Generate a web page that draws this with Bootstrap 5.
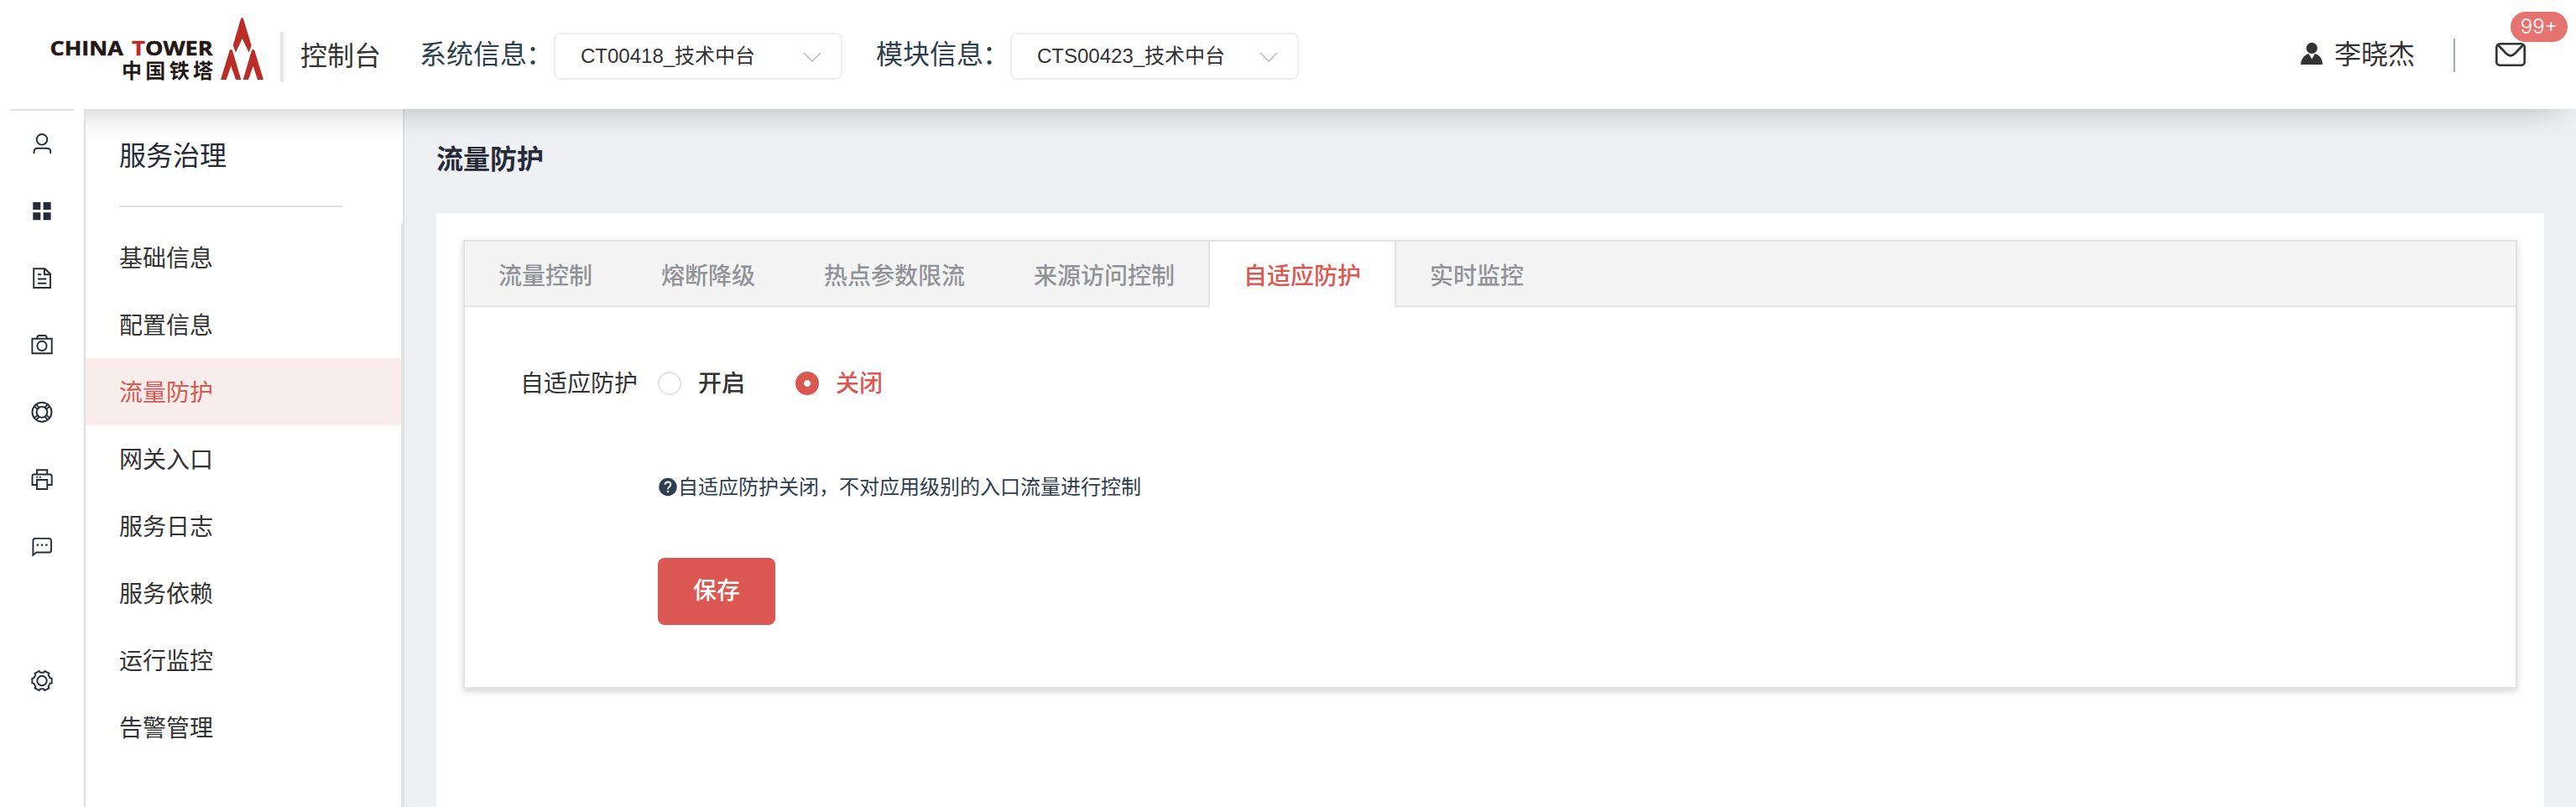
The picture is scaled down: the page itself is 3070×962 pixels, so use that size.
<!DOCTYPE html>
<html lang="zh-CN">
<head>
<meta charset="utf-8">
<meta name="viewport" content="width=device-width, initial-scale=1">
<title>流量防护 - 控制台</title>
<link href="https://cdn.jsdelivr.net/npm/bootstrap@5.3.0/dist/css/bootstrap.min.css" rel="stylesheet">
<style>
  :root { --brand: #db5751; --ink: #262b3a; --navy: #2c3e50; --line: #dfdfe3; }
  body { font-family: "Liberation Sans", "Noto Sans CJK SC", sans-serif; font-size: 28px; line-height: 1.2; color: #333; height: 962px; overflow: hidden; }
  svg { display: block; flex: none; }
  .fs-32 { font-size: 32px; line-height: 40px; }

  .topbar { height: 130px; background: #fff; box-shadow: 0 20px 40px -20px rgba(0,0,0,.24); z-index: 2; padding-left: 60px; }
  .logo { margin-top: 20px; }
  .logo text { font-family: "Open Sans", "Noto Sans CJK SC", sans-serif; font-weight: 700; fill: #231815; }
  .logo .latin { word-spacing: 3px; stroke: #231815; stroke-width: .5px; }
  .logo .red { fill: #bb2c27; }
  .logo tspan.red { stroke: #bb2c27; }
  .vbar { width: 4px; height: 60px; background: #e8e8e8; margin: 38px 20px 0 19px; }
  .console-name { margin-top: 47px; width: 142px; }
  .info-label { width: 160px; color: var(--navy); margin-top: 45px; white-space: nowrap; }
  .info-label span { margin-left: -1px; }
  .picker { width: 344px; height: 56px; margin-top: 39px; border: 2px solid #eee; border-radius: 8px; padding: 1px 23px 0 30px; font-size: 24px; }
  .picker-first { margin-right: 40px; }
  .user-side { margin-left: auto; padding-right: 60px; }
  .user-name { margin-top: 45px; }
  .user-bar { width: 2px; height: 40px; background: #a5acb7; margin: 46px 48px 0 46px; }
  .count { top: 14px; left: 18px; width: 68px; height: 36px; border-radius: 18px; background: #e57470; color: #fff; font-family: Inter, sans-serif; font-weight: 300; font-size: 24px; line-height: 36px; text-align: center; }

  .rail { width: 102px; background: #fff; border-right: 2px solid var(--line); z-index: 3; }
  .rail-rule { height: 2px; margin: 0 12px -1px; background: var(--line); }
  .rail-item { height: 80px; }
  .rail-item svg { fill: none; stroke: var(--ink); stroke-width: 1.9; }
  .rail-item.gap { margin-top: 80px; }

  .side { width: 380px; background: #fff; border-right: 2px solid #e0e1e5; }
  .side-title { height: 115px; padding: 36px 0 0 40px; color: var(--ink); }
  .side-rule { height: 2px; background: var(--line); margin: 0 72px 20px 40px; }
  .side-menu { border-right: 2px solid #e4e4e4; }
  .side-menu a { height: 80px; line-height: 77px; padding: 3px 0 0 40px; color: #333; text-decoration: none; display: block; }
  .side-menu a.active { background: #f9edeb; color: var(--brand); }

  .main-area { background: #eef0f4; padding: 0 38px; }
  .page-title { height: 124px; padding-top: 40px; color: var(--ink); font-weight: 600; margin: 0; }
  .sheet { background: #fff; padding: 32px; }
  .tab-card { height: 535px; border: 2px solid #e4e4e4; border-radius: 0; box-shadow: 0 4px 8px rgba(0,0,0,.12), 0 0 12px rgba(0,0,0,.06); }
  .tab-head { height: 78px; background: #f4f4f4; border-bottom: 2px solid #e6e6e6; flex-wrap: nowrap; }
  .tab-head .nav-link { height: 78px; line-height: 77px; padding: 3px 40px 0; border: 0 solid transparent; border-width: 0 2px; border-radius: 0; margin: 0 0 0 -2px; color: #909399; font-weight: 500; }
  .tab-head .nav-link.active { background: #fff; color: var(--brand); border-color: #e4e4e4; }
  .form-area { padding: 71px 0 0 66px; }
  .pick { height: 40px; line-height: 40px; font-weight: 500; }
  .pick-text { padding-top: 1px; }
  .opt { gap: 20px; }
  .opt-on { width: 164px; }
  .opt-off { color: var(--brand); }
  .dot-in { width: 28px; height: 28px; margin: 0; border: 2px solid #e4e4e4; flex: none; box-shadow: none !important; }
  .dot-in:checked { background: radial-gradient(circle, #fff 3.6px, var(--brand) 4.3px); border-color: var(--brand); }
  .hint { color: var(--navy); font-size: 24px; line-height: 36px; margin: 85px 0 0 164px; }
  .hint span { padding-top: 1px; }
  .save { width: 140px; height: 80px; margin: 66px 0 0 164px; background: var(--brand); border: 0; border-radius: 8px; color: #fff; font-size: 28px; font-weight: 500; }
</style>
</head>
<body class="d-flex flex-column">
<header class="topbar d-flex align-items-start position-relative flex-shrink-0">
  <svg class="logo" width="255" height="78" viewBox="60 20 255 78">
    <text class="latin" x="59.500" y="65.500" font-size="24" textLength="194" lengthAdjust="spacingAndGlyphs">CHINA <tspan class="red">T</tspan>OWER</text>
    <text x="145" y="92.500" font-size="24" textLength="109">中国铁塔</text>
    <g class="red" transform="scale(.33333)">
      <path d="M861 67Q866 60 870 67L899 163L890 188L866 138L843 188L833 163Z"/>
      <path d="M821 180Q826 174 831 180L862 285H843L826 236L809 285H789Z"/>
      <path d="M900 180Q905 174 910 180L942 285H921L905 236L888 285H869Z"/>
    </g>
  </svg>
  <div class="vbar"></div>
  <div class="console-name fs-32">控制台</div>
  <div class="info-label fs-32">系统信息<span>：</span></div>
  <div class="picker picker-first d-flex align-items-center justify-content-between"><span>CT00418_技术中台</span>
    <svg width="22" height="14" viewBox="0 0 22 14" fill="none" stroke="#c0c0c4" stroke-width="1.6"><path d="M1 2L11 12L21 2"/></svg></div>
  <div class="info-label fs-32">模块信息<span>：</span></div>
  <div class="picker d-flex align-items-center justify-content-between"><span>CTS00423_技术中台</span>
    <svg width="22" height="14" viewBox="0 0 22 14" fill="none" stroke="#c0c0c4" stroke-width="1.6"><path d="M1 2L11 12L21 2"/></svg></div>
  <div class="user-side d-flex align-items-start">
    <svg width="40" height="80" viewBox="2742 0 40 80" fill="#333"><circle cx="2755.2" cy="57.4" r="6.6"/><path d="M2742 77C2742.500 70 2746 65.500 2751.500 64L2755.200 70.500L2759 64C2764.500 65.500 2767.800 70 2768 77Z"/></svg>
    <div class="user-name fs-32">李晓杰</div>
    <div class="user-bar"></div>
    <div class="position-relative">
      <svg width="36" height="82" viewBox="2974 0 36 82" fill="none" stroke="#333" stroke-width="2.6"><rect x="2975.300" y="52.200" width="33.400" height="25.600" rx="4"/><path d="M2977 53.500L2986.500 63.500Q2992 69 2997.500 63.500L3007 53.500"/></svg>
      <span class="count position-absolute">99+</span>
    </div>
  </div>
</header>
<div class="d-flex flex-grow-1">
  <nav class="rail flex-shrink-0">
    <div class="rail-rule"></div>
    <div class="rail-item d-flex align-items-center justify-content-center"><svg width="32" height="32"><circle cx="16" cy="11.300" r="6.300"/><path d="M6.600 28V25.500Q6.600 21.700 11 21.700H21.500Q26.200 21.700 26.200 25.500V28"/></svg></div>
    <div class="rail-item d-flex align-items-center justify-content-center"><svg width="32" height="32"><path fill="#262b3a" stroke="none" d="M5.300 6h9v9h-9zM17.600 6h9v9h-9zM5.300 18.200h9v9h-9zM17.600 18.200h9v9h-9z"/></svg></div>
    <div class="rail-item d-flex align-items-center justify-content-center"><svg width="32" height="32"><path d="M6.200 5.200H19.500L26 11.500V28H6.200ZM19 5.200V12.300H26M11 12.300H15M11 17.500H21.300M11 22.800H21.300"/></svg></div>
    <div class="rail-item d-flex align-items-center justify-content-center"><svg width="32" height="32"><path d="M4.400 8.800H27.700V26.200H4.400ZM10 8.500Q10.500 5 12.500 5H19.700Q21.500 5 22 8.500"/><circle cx="16" cy="17.400" r="5.600"/></svg></div>
    <div class="rail-item d-flex align-items-center justify-content-center"><svg width="32" height="32"><circle cx="16" cy="16.300" r="11.500"/><circle cx="16" cy="16.300" r="6.400"/><path d="M7 9.500L11 13M9.300 7.200L12.800 11.200M25 9.500L21 13M22.700 7.200L19.200 11.200M7 23.100L11 19.600M9.300 25.400L12.800 21.400M25 23.100L21 19.600M22.700 25.400L19.200 21.400"/></svg></div>
    <div class="rail-item d-flex align-items-center justify-content-center"><svg width="32" height="32"><path d="M10 10.500V5.200H22.300V10.500M10 23H4.500V12.500Q4.500 10.500 6.500 10.500H25.500Q27.700 10.500 27.700 12.500V23H22.300M10 17H22.300V28H10ZM9.300 13.800H11M13 13.800H14.700"/></svg></div>
    <div class="rail-item d-flex align-items-center justify-content-center"><svg width="32" height="32"><path d="M5.400 26.800V9.500Q5.400 6.900 8 6.900H24.500Q27 6.900 27 9.500V21Q27 23.500 24.500 23.500H9.500Z"/><path fill="#262b3a" stroke="none" d="M9.600 13.500h2.300v2.300H9.600zM14.900 13.500h2.300v2.300h-2.300zM20.200 13.500h2.300v2.300h-2.300z"/></svg></div>
    <div class="rail-item gap d-flex align-items-center justify-content-center"><svg width="32" height="32"><g transform="translate(16 16.500)"><circle r="5.700"/><path d="M11.700-2.800V2.800L9.500 3.300Q9 5 7.600 6.600L8.400 8.700L3.400 11.500L1.900 9.800H-1.900L-3.400 11.500L-8.400 8.700L-7.600 6.600Q-9 5-9.500 3.300L-11.700 2.800V-2.800L-9.500-3.300Q-9-5-7.600-6.600L-8.400-8.700L-3.400-11.500L-1.900-9.800H1.900L3.400-11.500L8.400-8.700L7.600-6.600Q9-5 9.500-3.300Z"/></g></svg></div>
  </nav>
  <aside class="side d-flex flex-column flex-shrink-0">
    <div class="side-title fs-32">服务治理</div>
    <div class="side-rule"></div>
    <div class="side-menu flex-grow-1">
      <a href="#">基础信息</a>
      <a href="#">配置信息</a>
      <a href="#" class="active">流量防护</a>
      <a href="#">网关入口</a>
      <a href="#">服务日志</a>
      <a href="#">服务依赖</a>
      <a href="#">运行监控</a>
      <a href="#">告警管理</a>
    </div>
  </aside>
  <main class="main-area flex-grow-1 d-flex flex-column">
    <h1 class="page-title fs-32">流量防护</h1>
    <section class="sheet flex-grow-1">
      <div class="tab-card card">
        <div class="tab-head nav nav-tabs">
          <a class="nav-link" href="#">流量控制</a>
          <a class="nav-link" href="#">熔断降级</a>
          <a class="nav-link" href="#">热点参数限流</a>
          <a class="nav-link" href="#">来源访问控制</a>
          <a class="nav-link active" href="#">自适应防护</a>
          <a class="nav-link" href="#">实时监控</a>
        </div>
        <div class="form-area">
          <div class="d-flex align-items-center pick">
            <span class="pick-text fw-normal me-4">自适应防护</span>
            <label class="opt opt-on d-flex align-items-center"><input class="form-check-input dot-in" type="radio" name="guard"><span class="pick-text">开启</span></label>
            <label class="opt opt-off d-flex align-items-center"><input class="form-check-input dot-in" type="radio" name="guard" checked><span class="pick-text">关闭</span></label>
          </div>
          <div class="hint d-flex align-items-center">
            <svg width="24" height="24" viewBox="0 0 24 24"><circle cx="12" cy="11.500" r="10.700" fill="#2c3e50"/><path d="M8.600 8.800Q8.800 5.500 12 5.500T15.300 8.600Q15.300 10.200 13.500 11.500Q12 12.500 12 14.200" fill="none" stroke="#fff" stroke-width="1.900"/><circle cx="12" cy="17" r="1.300" fill="#fff"/></svg>
            <span>自适应防护关闭，不对应用级别的入口流量进行控制</span>
          </div>
          <button type="button" class="btn save d-flex align-items-center justify-content-center">保存</button>
        </div>
      </div>
    </section>
  </main>
</div>
<script src="https://cdn.jsdelivr.net/npm/bootstrap@5.3.0/dist/js/bootstrap.bundle.min.js"></script>
</body>
</html>
